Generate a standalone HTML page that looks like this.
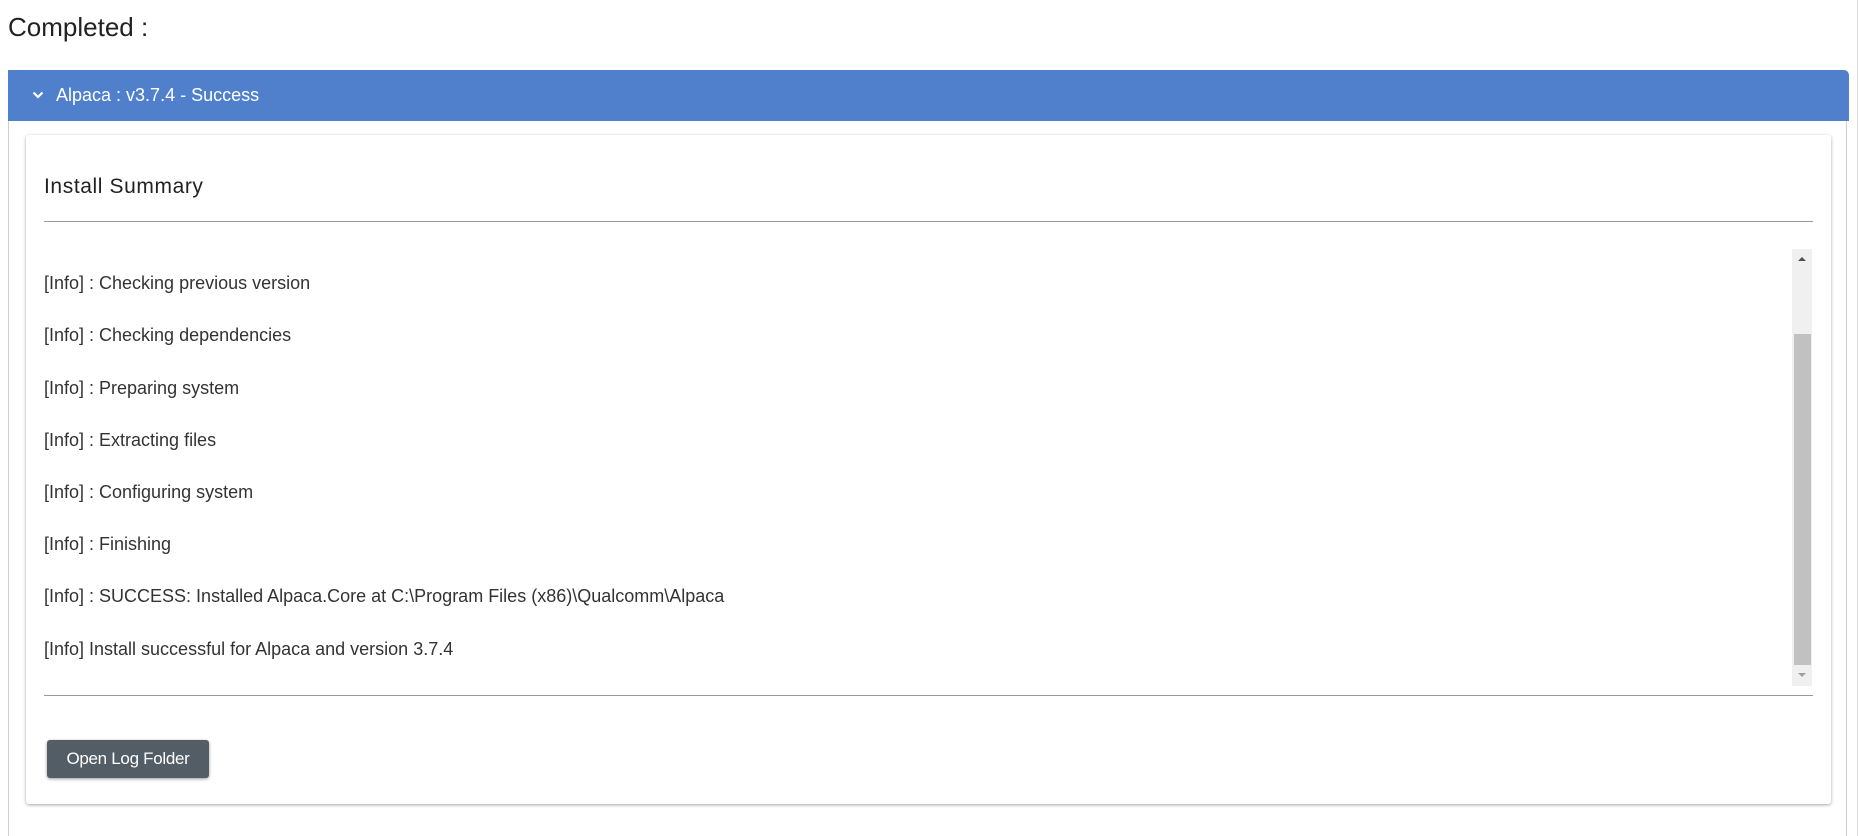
<!DOCTYPE html>
<html><head><meta charset="utf-8"><style>
html,body{margin:0;width:1860px;height:836px;overflow:hidden}
body{background:#fff;font-family:"Liberation Sans",Arial,sans-serif;position:relative;color:#222}
.abs{position:absolute}
.t{font-size:26px;left:8px;top:12px;color:#222}
.outer{left:8px;top:70px;width:1839px;height:766px;border-left:1px solid #cfcfcf;border-right:1px solid #cfcfcf;border-radius:0 6px 0 0;box-sizing:border-box}
.hdr{left:8px;top:70px;width:1841px;height:51px;background:#5080cc;border-radius:0 5px 0 0;color:#fff;font-size:18px}
.card{left:26px;top:135px;width:1805px;height:669px;background:#fff;box-shadow:0 1px 3px rgba(0,0,0,.35);border-radius:3px}
.log{font-size:18px;color:#333;left:44px}
.hr{left:44px;width:1769px;height:1px;background:#9a9a9a}
</style></head><body>
<div class="abs t">Completed :</div>
<div class="abs" style="left:1857px;top:0;width:1px;height:836px;background:#ddd"></div>
<div class="abs outer"></div>
<div class="abs hdr">
<svg class="abs" style="left:24px;top:20px" width="12" height="10" viewBox="0 0 12 10"><path d="M1.5 2.5 L6 7 L10.5 2.5" stroke="#fff" stroke-width="2.2" fill="none"/></svg>
<div class="abs" style="left:48px;top:15px">Alpaca : v3.7.4 - Success</div>
</div>
<div class="abs card"></div>
<div class="abs" style="left:44px;top:175px;font-size:21px;letter-spacing:0.6px;color:#222">Install Summary</div>
<div class="abs hr" style="top:221px"></div>
<div class="abs log" style="top:273px">[Info] : Checking previous version</div>
<div class="abs log" style="top:325px">[Info] : Checking dependencies</div>
<div class="abs log" style="top:378px">[Info] : Preparing system</div>
<div class="abs log" style="top:430px">[Info] : Extracting files</div>
<div class="abs log" style="top:482px">[Info] : Configuring system</div>
<div class="abs log" style="top:534px">[Info] : Finishing</div>
<div class="abs log" style="top:586px">[Info] : SUCCESS: Installed Alpaca.Core at C:\Program Files (x86)\Qualcomm\Alpaca</div>
<div class="abs log" style="top:639px">[Info] Install successful for Alpaca and version 3.7.4</div>
<div class="abs" style="left:1792px;top:249px;width:20px;height:437px;background:#f0f0f0"></div>
<div class="abs" style="left:1794px;top:334px;width:17px;height:331px;background:#c1c1c1"></div>
<svg class="abs" style="left:1796px;top:256px" width="12" height="6"><path d="M2 5 L6 1 L10 5Z" fill="#505050"/></svg>
<svg class="abs" style="left:1796px;top:672px" width="12" height="6"><path d="M2 1 L6 5 L10 1Z" fill="#a0a0a0"/></svg>
<div class="abs hr" style="top:695px"></div>
<div class="abs" style="left:47px;top:740px;width:162px;height:38px;background:#535d66;border-radius:3px;box-shadow:0 1px 3px rgba(0,0,0,.4);color:#fff;font-size:17px;line-height:38px;text-align:center;letter-spacing:-0.3px">Open Log Folder</div>
</body></html>
